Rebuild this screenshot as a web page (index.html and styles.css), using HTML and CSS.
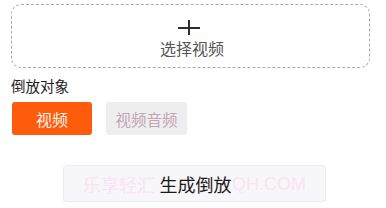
FILE: index.html
```html
<!DOCTYPE html>
<html lang="zh">
<head>
<meta charset="utf-8">
<link rel="stylesheet" href="styles.css">
</head>
<body>
<div class="page">
  <div class="upload">
    <svg class="plus" width="22" height="15" viewBox="0 0 22 15">
      <path d="M0 8H22M11 0V15" stroke="#2e2e2e" stroke-width="2" fill="none"/>
    </svg>
    <div class="upload-text">选择视频</div>
  </div>
  <div class="label">倒放对象</div>
  <div class="options">
    <div class="opt opt-active">视频</div>
    <div class="opt opt-idle">视频音频</div>
  </div>
  <div class="generate">
    <span class="gen-text">生成倒放</span>
    <span class="watermark wm-left">乐享轻汇</span>
    <span class="watermark wm-right">QH.COM</span>
  </div>
</div>
</body>
</html>
```
FILE: styles.css
```css
html, body {
  margin: 0;
  padding: 0;
  background: #ffffff;
}
body {
  font-family: "Noto Sans CJK SC", "Noto Sans", sans-serif;
  color: #222;
}
.page {
  padding: 4px 16px 0 11px;
  display: flex;
  flex-direction: column;
}
.upload {
  box-sizing: border-box;
  height: 64px;
  border: 1px dashed #a9a9a9;
  border-radius: 10px;
  display: flex;
  flex-direction: column;
  align-items: center;
  padding-top: 15px;
}
.plus {
  display: block;
  margin-left: -3px;
}
.upload-text {
  margin-top: 4px;
  font-size: 16px;
  line-height: 19px;
  color: #555;
  margin-left: 3px;
}
.label {
  margin-top: 8px;
  font-size: 14.5px;
  line-height: 20px;
  color: #1e1e1e;
}
.options {
  display: flex;
  gap: 14px;
  margin-top: 6px;
  padding-left: 1px;
}
.opt {
  box-sizing: border-box;
  height: 33px;
  width: 80px;
  border-radius: 3px;
  display: flex;
  align-items: center;
  justify-content: center;
  font-size: 16px;
}
.opt-active {
  background: #ff5b0c;
  color: #fff3ee;
}
.opt-idle {
  width: 81px;
  background: #efeeef;
  color: #c3a6b6;
  font-size: 15.5px;
}
.generate {
  position: relative;
  box-sizing: border-box;
  margin-top: 30px;
  margin-left: 52px;
  width: 263px;
  height: 37px;
  border: 1px solid #ececec;
  border-radius: 4px;
  background: #f7f6f8;
  box-shadow: 0 1px 2px rgba(0, 0, 0, 0.06);
  display: flex;
  align-items: center;
  justify-content: center;
}
.gen-text {
  position: relative;
  z-index: 2;
  font-size: 18px;
  color: #1a1a1a;
  margin-left: 2px;
}
.watermark {
  position: absolute;
  top: 50%;
  transform: translateY(-50%);
  z-index: 1;
  white-space: nowrap;
  color: #fae3f5;
}
.wm-left {
  left: 19px;
  font-size: 18px;
}
.wm-right {
  left: 168px;
  font-family: "Liberation Sans", sans-serif;
  font-size: 18px;
}
```
